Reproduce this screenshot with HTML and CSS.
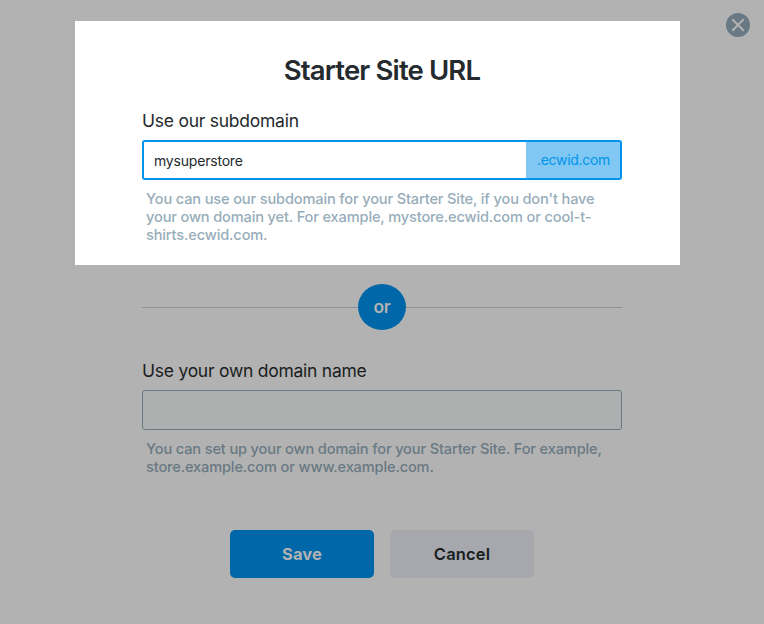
FILE: index.html
```html
<!DOCTYPE html>
<html lang="en">
<head>
    <meta charset="UTF-8">
    <meta name="viewport" content="width=device-width, initial-scale=1.0">
    <title>Starter Site URL</title>
    <link rel="stylesheet" href="styles.css">
</head>
<body>
    <button class="close" aria-label="Close">
        <svg width="24" height="24" viewBox="0 0 24 24">
            <circle cx="12" cy="12" r="12" fill="#697983"/>
            <path d="M6.8 6.8L17.2 17.2M17.2 6.8L6.8 17.2" stroke="#b2b2b2" stroke-width="2" stroke-linecap="round"/>
        </svg>
    </button>

    <!-- Subdomain -->
    <section class="panel">
        <h1>Starter Site URL</h1>
        <label for="subdomain">Use our subdomain</label>
        <div class="input-group">
            <input type="text" id="subdomain" value="mysuperstore">
            <span class="suffix">.ecwid.com</span>
        </div>
        <p class="hint hint-sub">You can use our subdomain for your Starter Site, if you don't have<br>your own domain yet. For example, mystore.ecwid.com or cool-t-<br>shirts.ecwid.com.</p>
    </section>

    <div class="container">
        <div class="divider"><span>or</span></div>

        <!-- Own domain -->
        <label for="domain" class="own">Use your own domain name</label>
        <input type="text" id="domain" class="domain">
        <p class="hint hint-own">You can set up your own domain for your Starter Site. For example,<br>store.example.com or www.example.com.</p>

        <div class="buttons">
            <button class="btn save">Save</button>
            <button class="btn cancel">Cancel</button>
        </div>
    </div>
</body>
</html>
```
FILE: styles.css
```css
* {
    margin: 0;
    padding: 0;
    box-sizing: border-box;
}

body {
    font-family: 'Inter', sans-serif;
    background-color: #b2b2b2;
    color: #191d20;
    height: 624px;
    padding-top: 21px;
    overflow: hidden;
}

.close {
    position: absolute;
    top: 13px;
    right: 14px;
    width: 24px;
    height: 24px;
    border: none;
    background: none;
    cursor: pointer;
}

.close svg {
    display: block;
}

.panel {
    width: 605px;
    height: 244px;
    margin-left: 75px;
    padding: 29px 58px 0 67px;
    background-color: #fff;
    color: #242a2e;
}

h1 {
    font-size: 27.5px;
    line-height: 40px;
    font-weight: 600;
    letter-spacing: -0.85px;
    text-align: center;
}

label {
    display: block;
    font-size: 17.5px;
    line-height: 24px;
    letter-spacing: -0.25px;
}

.panel label {
    margin-top: 19px;
}

.input-group {
    display: flex;
    height: 40px;
    margin-top: 7px;
    border: 2px solid #0095eb;
    border-radius: 3px;
}

input {
    min-width: 0;
    border: none;
    outline: none;
    font-family: inherit;
    font-size: 14px;
    letter-spacing: -0.2px;
    color: inherit;
    background: none;
}

.input-group input {
    flex: 1;
    padding: 0 10px;
}

.suffix {
    width: 94px;
    line-height: 36px;
    padding-left: 11px;
    font-size: 14px;
    letter-spacing: -0.3px;
    color: #0095eb;
    background-color: #80c7f4;
}

.hint {
    margin-left: 4px;
    font-size: 14.6px;
    line-height: 18px;
    font-weight: 500;
    letter-spacing: -0.15px;
    white-space: nowrap;
}

.hint-sub {
    margin-top: 10px;
    color: #97adba;
}

.hint-own {
    margin-top: 10px;
    color: #697983;
}

.container {
    width: 480px;
    margin-left: 142px;
    padding-top: 19px;
}

.divider {
    display: flex;
    align-items: center;
    height: 46px;
}

.divider::before,
.divider::after {
    content: "";
    flex: 1;
    height: 1px;
    background-color: #8b929b;
}

.divider span {
    width: 48px;
    height: 46px;
    border-radius: 50%;
    background-color: #0068a8;
    color: #b2b2b2;
    font-size: 17.5px;
    line-height: 46px;
    font-weight: 600;
    letter-spacing: -0.4px;
    text-align: center;
}

.own {
    margin-top: 29px;
}

.domain {
    display: block;
    width: 100%;
    height: 40px;
    margin-top: 7px;
    padding: 0 10px;
    border: 1px solid #697983;
    border-radius: 3px;
    background-color: #aeb0b0;
}

.buttons {
    display: flex;
    justify-content: center;
    gap: 16px;
    margin-top: 54px;
}

.btn {
    width: 144px;
    height: 48px;
    border: none;
    border-radius: 5px;
    font-family: inherit;
    font-size: 16.5px;
    font-weight: 600;
    letter-spacing: 0.15px;
    cursor: pointer;
}

.save {
    background-color: #0068a8;
    color: #b2b2b2;
    font-weight: 700;
}

.cancel {
    background-color: #a6a8ad;
    color: #191d20;
}
```
